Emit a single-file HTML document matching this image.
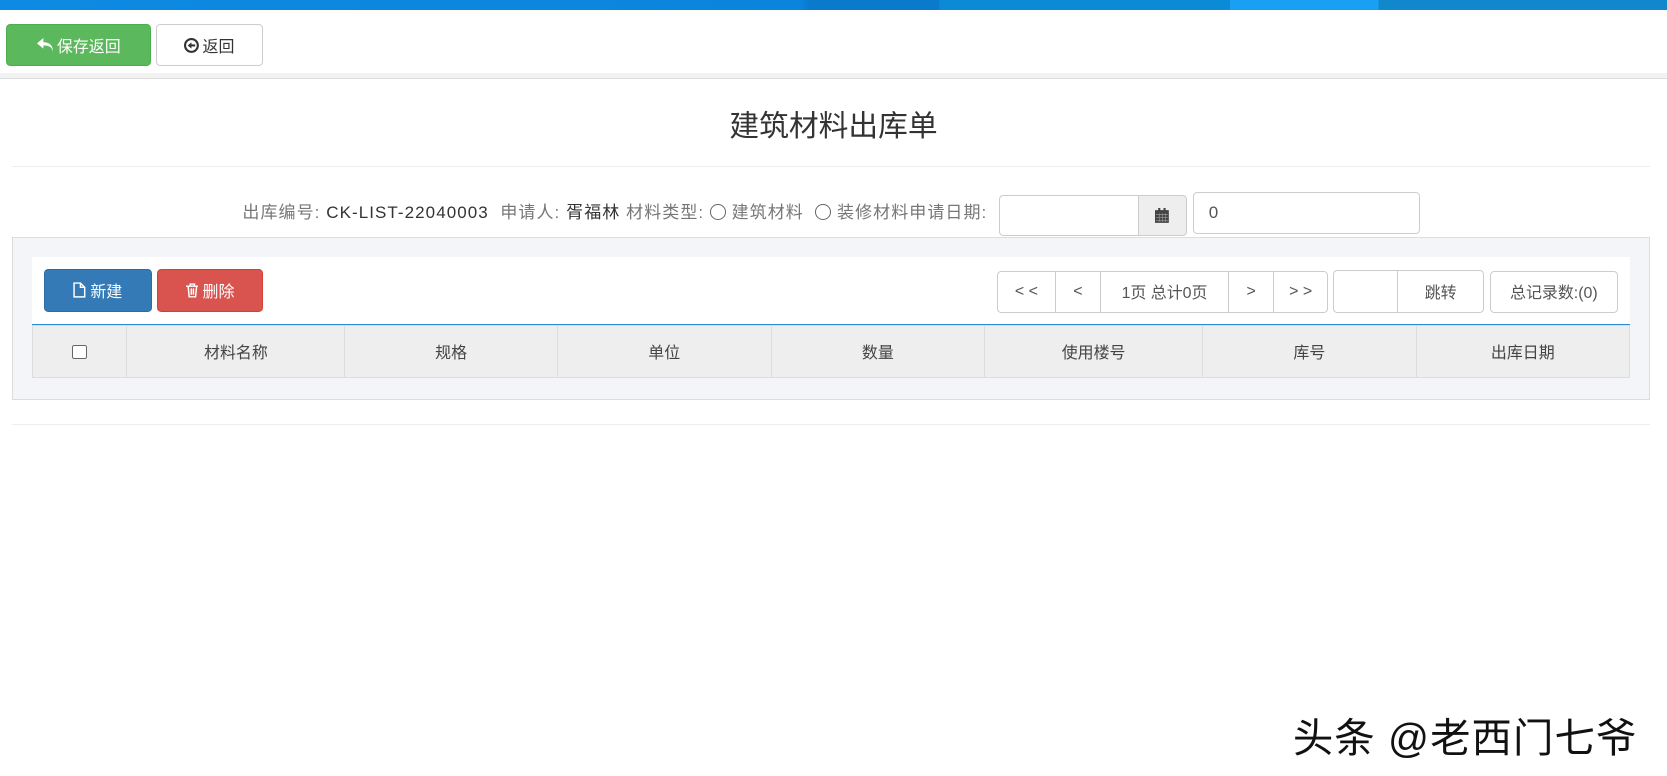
<!DOCTYPE html>
<html><head><meta charset="utf-8">
<style>
html,body{margin:0;padding:0;background:#fff;overflow:hidden}
body{width:1667px;height:776px}
#w{position:relative;width:1568px;height:730px;zoom:1.0632;font-family:"Liberation Sans","Noto Sans CJK SC",sans-serif;font-size:15px;color:#333}
.a{position:absolute;box-sizing:border-box}
.btn{position:absolute;box-sizing:border-box;border-radius:4px;display:flex;align-items:center;justify-content:center;font-size:15px}
.c{display:flex;align-items:center;justify-content:center}
</style></head><body><div id="w">
<div class="a" style="left:0;top:0;width:1568px;height:9px;background:linear-gradient(90deg,#0d8ae3,#0b84dc 48%,#0a7bcc 48.5%,#0a7bcc 56.3%,#0b8ad6 56.4%,#0b8ad6 73.8%,#1aa0f2 73.8%,#1aa0f2 82.7%,#1188cc 82.7%,#1188cc)"></div>
<div class="btn" style="left:6px;top:23px;width:136px;height:39px;background:#5cb85c;border:1px solid #4cae4c;color:#fff">
<svg width="16" height="14" viewBox="0 0 16 14" style="margin-right:3px"><path d="M6 0L0 5l6 5V7c5 0 8 1 9 6 0-6-3-9-9-9z" fill="#fff"/></svg>保存返回</div>
<div class="btn" style="left:147px;top:23px;width:100px;height:39px;background:#fff;border:1px solid #ccc;color:#333">
<svg width="14" height="14" viewBox="0 0 14 14" style="margin-right:3px"><circle cx="7" cy="7" r="6" fill="none" stroke="#333" stroke-width="2"/><path d="M3.5 7L7 4v2h3.5v2H7v2z" fill="#333"/></svg>返回</div>
<div class="a" style="left:0;top:69px;width:1568px;height:5px;background:#f2f2f2;border-bottom:1px solid #ddd"></div>
<div class="a" style="left:0;top:95px;width:1568px;text-align:center;font-size:28px;color:#333">建筑材料出库单</div>
<div class="a" style="left:11px;top:156px;width:1541px;height:1px;background:#eee"></div>
<div class="a" style="left:228px;top:189px;white-space:nowrap;color:#777;font-size:16px;letter-spacing:1px;line-height:22px">出库编号: <span style="color:#333">CK-LIST-22040003</span>&nbsp; 申请人: <span style="color:#333">胥福林</span> 材料类型: <span style="display:inline-block;width:13px;height:13px;border:1px solid #666;border-radius:50%;vertical-align:-2px"></span> 建筑材料&nbsp; <span style="display:inline-block;width:13px;height:13px;border:1px solid #666;border-radius:50%;vertical-align:-2px"></span> 装修材料申请日期:</div>
<div class="a" style="left:940px;top:183px;width:131px;height:39px;border:1px solid #ccc;border-radius:4px 0 0 4px"></div>
<div class="a c" style="left:1070px;top:183px;width:46px;height:39px;border:1px solid #ccc;border-radius:0 4px 4px 0;background:#eee"><svg width="13" height="14" viewBox="0 0 13 14"><rect x="0" y="2" width="13" height="12" fill="#444"/><rect x="3" y="0" width="2" height="3" fill="#444"/><rect x="8" y="0" width="2" height="3" fill="#444"/><path d="M1 6h11M1 9h11M1 12h11M4 5v8M7 5v8M10 5v8" stroke="#999" stroke-width=".6"/></svg></div>
<div class="a" style="left:1122px;top:181px;width:214px;height:39px;border:1px solid #ccc;border-radius:4px;padding:9px 14px;color:#555;font-size:16px">0</div>
<div class="a" style="left:11px;top:223px;width:1541px;height:153px;background:#f4f5f9;border:1px solid #ddd"></div>
<div class="a" style="left:30px;top:242px;width:1503px;height:64px;background:#fff;border-bottom:1px solid #2a8ad4"></div>
<div class="btn" style="left:41px;top:253px;width:102px;height:40px;background:#337ab7;border:1px solid #2e6da4;color:#fff">
<svg width="12" height="15" viewBox="0 0 12 15" style="margin-right:4px"><path d="M1 1h6l4 4v9H1z M7 1v4h4" fill="none" stroke="#fff" stroke-width="1.4"/></svg>新建</div>
<div class="btn" style="left:148px;top:253px;width:99px;height:40px;background:#d9534f;border:1px solid #d43f3a;color:#fff">
<svg width="12" height="14" viewBox="0 0 12 14" style="margin-right:4px"><path d="M0 3h12M4 3V1h4v2M2 3l1 10h6l1-10M5 5v6M7 5v6" fill="none" stroke="#fff" stroke-width="1.4"/></svg>删除</div>
<div class="a" style="left:938px;top:255px;width:311px;height:39px;border:1px solid #ccc;border-radius:4px;display:flex;color:#555;font-size:15px">
<div class="c" style="width:53px;border-right:1px solid #ccc">&lt; &lt;</div>
<div class="c" style="width:42px;border-right:1px solid #ccc">&lt;</div>
<div class="c" style="width:119px;border-right:1px solid #ccc">1页 总计0页</div>
<div class="c" style="width:42px;border-right:1px solid #ccc">&gt;</div>
<div class="c" style="flex:1">&gt; &gt;</div></div>
<div class="a" style="left:1254px;top:254px;width:142px;height:40px;border:1px solid #ccc;border-radius:4px;display:flex;color:#555">
<div style="width:59px;border-right:1px solid #ccc"></div><div class="c" style="flex:1">跳转</div></div>
<div class="a c" style="left:1401px;top:255px;width:121px;height:39px;border:1px solid #ccc;border-radius:4px;color:#555">总记录数:(0)</div>
<div class="a" style="left:30px;top:306px;width:1503px;height:50px;background:#eee;border:1px solid #ddd;display:flex;color:#444;font-size:15px">
<div class="c" style="width:88px;border-right:1px solid #ddd"><span style="width:12px;height:12px;border:1px solid #666;border-radius:2px;background:#fff;display:inline-block"></span></div>
<div class="c" style="width:204px;border-right:1px solid #ddd">材料名称</div>
<div class="c" style="width:199px;border-right:1px solid #ddd">规格</div>
<div class="c" style="width:200px;border-right:1px solid #ddd">单位</div>
<div class="c" style="width:200px;border-right:1px solid #ddd">数量</div>
<div class="c" style="width:204px;border-right:1px solid #ddd">使用楼号</div>
<div class="c" style="width:200px;border-right:1px solid #ddd">库号</div>
<div class="c" style="flex:1">出库日期</div></div>
<div class="a" style="left:11px;top:399px;width:1541px;height:1px;background:#eee"></div>
<div class="a" style="left:1216px;top:663px;font-size:38px;letter-spacing:1px;color:#111;white-space:nowrap;text-shadow:0 0 2px #fff,1px 1px 0 #fff,-1px -1px 0 #fff">头条 @老西门七爷</div>
</div></body></html>
